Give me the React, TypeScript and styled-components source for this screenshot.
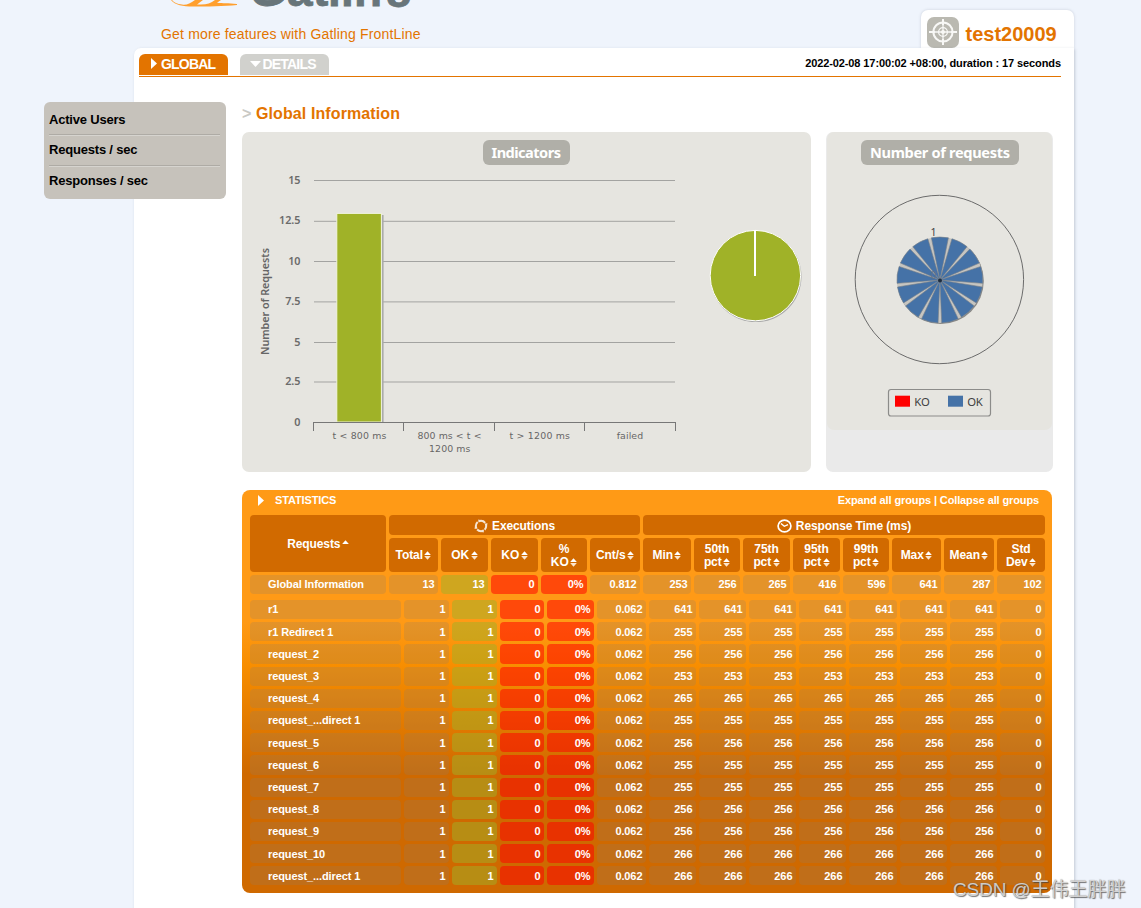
import React from "react";
import styled, { createGlobalStyle } from "styled-components";

const GlobalStyle = createGlobalStyle`
  * { box-sizing: border-box; }
  html, body { margin: 0; padding: 0; background: #eff4fc; }
  body { font-family: "Liberation Sans", Arial, sans-serif; overflow: hidden; }
`;

const Frame = styled.div`
  width: 1141px;
  height: 908px;
  overflow: hidden;
  position: relative;
  padding-left: 134px;
`;

const Header = styled.header`
  height: 48px;
  width: 940px;
  display: flex;
  justify-content: space-between;
`;

const Brand = styled.div`
  padding-left: 27px;
  display: flex;
  flex-direction: column;
`;

const LogoArt = styled.svg`
  display: block;
  width: 270px;
  height: 14px;
`;

const Promo = styled.a`
  margin-top: 11px;
  line-height: 18px;
  font-size: 14px;
  letter-spacing: 0.17px;
  color: #e37400;
  white-space: nowrap;
`;

const SimTab = styled.div`
  margin-top: 10px;
  width: 153px;
  height: 38px;
  padding: 7px 0 0 6px;
  display: flex;
  gap: 6.5px;
  background: #fff;
  border-radius: 7px 7px 0 0;
  box-shadow: 0 0 3px rgba(90, 100, 120, 0.25);
`;

const SimName = styled.span`
  font-weight: bold;
  font-size: 20px;
  line-height: 34px;
  color: #e37400;
`;

const Main = styled.main`
  position: relative;
  width: 940px;
  height: 880px;
  padding: 6px 13px 0 5px;
  background: #fff;
  border-radius: 7px 0 0 0;
  box-shadow: 1px 1px 3px rgba(90, 100, 120, 0.3);
`;

const NavBar = styled.nav`
  height: 23px;
  display: flex;
  align-items: flex-start;
  gap: 12px;
  border-bottom: 1px solid #e37400;
`;

const NavTab = styled.div<{ $active?: boolean }>`
  width: 89px;
  height: 21px;
  padding-left: ${(p) => (p.$active ? 11.5 : 10)}px;
  display: flex;
  gap: ${(p) => (p.$active ? 4.5 : 1.5)}px;
  border-radius: 6px 6px 0 0;
  background: ${(p) => (p.$active ? "#e37400" : "#d1d1cd")};
  color: #fff;
  font-size: 14px;
  font-weight: bold;
  line-height: 21px;
  letter-spacing: -0.8px;
`;

const TabMark = styled.svg`
  flex: none;
  margin-top: 4px;
`;

const RunInfo = styled.div`
  margin-left: auto;
  font-size: 11px;
  font-weight: bold;
  line-height: 19px;
  letter-spacing: -0.1px;
  color: #000;
`;

const Body = styled.div`
  display: flex;
  align-items: flex-start;
  gap: 16px;
  margin-left: -95px;
`;

const Menu = styled.ul`
  flex: none;
  margin: 25px 0 0;
  padding: 3px 6px 0 5px;
  width: 182px;
  height: 97px;
  list-style: none;
  background: #c6c2bb;
  border-radius: 6px;
`;

const MenuItem = styled.li`
  height: 30.3px;
  line-height: 29px;
  font-size: 13px;
  font-weight: bold;
  letter-spacing: -0.2px;
  color: #000;
  &:not(:last-child) {
    border-bottom: 1px solid #aeaba5;
    box-shadow: 0 1px 0 #d6d4cf;
  }
`;

const Content = styled.section`
  width: 811px;
`;

const PageTitle = styled.h1`
  margin: 25px 0 0;
  height: 30px;
  font-size: 16px;
  line-height: 23px;
  letter-spacing: 0.1px;
  color: #e37400;
  & > span { color: #c9c9c5; }
`;

const Charts = styled.div`
  display: flex;
  gap: 15px;
`;

const Panel = styled.div<{ $w: number; $bg: string }>`
  width: ${(p) => p.$w}px;
  height: 340px;
  border-radius: 7px;
  background: ${(p) => p.$bg};
  svg { display: block; }
`;

const Stats = styled.div`
  margin-top: 18px;
  width: 810px;
  height: 403px;
  padding: 0 7px 0 8px;
  border-radius: 8px;
  background: linear-gradient(#ff9a16 0, #ff9a16 132px, #f88e00 175px, #cf6900 284px, #cf6900 100%);
  color: #fff;
  font-size: 11px;
  font-weight: bold;
  letter-spacing: -0.1px;
`;

const StatsTop = styled.div`
  height: 25px;
  padding: 0 6px 0 8px;
  display: flex;
  line-height: 21px;
  letter-spacing: -0.12px;
  svg { margin: 5px 11px 0 0; }
`;

const StatsLinks = styled.span`
  margin-left: auto;
`;

const HeadGrid = styled.div`
  display: grid;
  grid-template-columns: 136px 49px 47px 47px 46px 50px 48px 46px 47px 47px 46px 49px 50px 48px;
  grid-template-rows: 20px 34px 19px;
  gap: 3px;
`;

const Th = styled.div<{ $span?: number; $rows?: number }>`
  grid-column: span ${(p) => p.$span ?? 1};
  grid-row: span ${(p) => p.$rows ?? 1};
  padding-top: ${(p) => (p.$span ? 2 : 1)}px;
  display: flex;
  align-items: center;
  justify-content: center;
  gap: 4px;
  background: #d16a00;
  border-radius: 4px;
  font-size: 12px;
  line-height: 13px;
  white-space: nowrap;
`;

const ThLabel = styled.span`
  display: flex;
  flex-direction: column;
  align-items: center;
  & > span {
    display: flex;
    align-items: center;
    gap: 1.5px;
  }
`;

const RowsGrid = styled.div`
  margin-top: 6px;
  display: grid;
  grid-template-columns: 151px 45px 45px 44px 47px 49px 47px 47px 47px 47px 48px 47px 47px 45px;
  grid-auto-rows: 19.19px;
  gap: 3px;
`;

type Tone = "plain" | "ok" | "ko";

const tones: Record<Tone, string> = {
  plain: "rgba(146, 128, 100, 0.25)",
  ok: "rgba(159, 178, 40, 0.5)",
  ko: "rgba(255, 0, 0, 0.52)",
};

const Cell = styled.div<{ $tone: Tone; $pad: number; $top: number }>`
  padding-top: ${(p) => p.$top}px;
  padding-right: ${(p) => p.$pad}px;
  border-radius: 4px;
  background: ${(p) => tones[p.$tone]};
  text-align: right;
  line-height: 19px;
  white-space: nowrap;
`;

const NameCell = styled(Cell)`
  padding-left: 18px;
  text-align: left;
`;

const Watermark = styled.div`
  position: absolute;
  left: 953px;
  top: 878px;
  font: 19px/24px "Liberation Sans", "Noto Sans CJK SC", sans-serif;
  letter-spacing: -0.1px;
  color: rgba(225, 225, 225, 0.85);
  text-shadow: 1px 1px 1px rgba(60, 60, 60, 0.7), 0 0 1px rgba(90, 90, 90, 0.6);
  white-space: nowrap;
`;

const Sort = ({ up }: { up?: boolean }) => (
  <svg width="7" height="9" viewBox="0 0 7 9">
    <path d="M3.500 .3 6.800 4.100H.2Z" fill="#fff" />
    {!up && <path d="M3.500 8.700 .2 4.900H6.800Z" fill="#fbe6cf" />}
  </svg>
);

const Target = () => (
  <svg width="32" height="31" viewBox="0 0 32 31">
    <rect width="32" height="31" rx="7" fill="#bab9b1" />
    <g fill="none" stroke="#f8f8f6">
      <circle cx="16" cy="15" r="9.6" strokeWidth="2" />
      <circle cx="16" cy="15" r="4.4" strokeWidth="1.3" />
      <path d="M16 2v26M2 15h28" strokeWidth="1.3" />
      <path d="M16 2v6M16 22v6M2 15h6M24 15h6" strokeWidth="2" />
    </g>
    <circle cx="16" cy="15" r="2" fill="#f8f8f6" />
  </svg>
);

const chartFont = '"Noto Sans", "Open Sans", sans-serif';
const tickFont = '"DejaVu Sans", sans-serif';

const yTicks = [
  { y: 180.5, label: "15" },
  { y: 221.3, label: "12.5" },
  { y: 261.5, label: "10" },
  { y: 301.9, label: "7.5" },
  { y: 342.5, label: "5" },
  { y: 382, label: "2.5" },
  { y: 422.5, label: "0" },
];

const Badge = ({ x, w, tx, tw, children }: { x: number; w: number; tx: number; tw: number; children: string }) => (
  <g>
    <rect x={x} y={140} width={w} height={25} rx={6} fill="#b0afa8" />
    <text x={tx} y={158.3} textLength={tw} fontFamily={chartFont} fontWeight="bold" fontSize="14.6" fill="#fff">
      {children}
    </text>
  </g>
);

const Indicators = () => (
  <svg width="569" height="340" viewBox="242 132 569 340">
    <Badge x={483} w={87} tx={491.5} tw={69.5}>Indicators</Badge>
    {yTicks.map((t) => (
      <g key={t.label}>
        <path d={`M314 ${t.y}H675`} stroke={t.label === "0" ? "#777" : "#a3a3a1"} />
        <text x="300.5" y={t.y + 3} textAnchor="end" fontFamily={chartFont} fontWeight="600" fontSize="10.8" fill="#6b6b6b">
          {t.label}
        </text>
      </g>
    ))}
    <path d="M313.5 422v9M403.5 422v9M494.5 422v9M584.5 422v9M675.5 422v9" stroke="#777" />
    <path d="M382.600 215v207" stroke="#aaa" strokeWidth="2" />
    <rect x="336.8" y="213.4" width="44.6" height="208.6" fill="#a0b228" stroke="#f1f3df" />
    <path d="M314 422.5H675" stroke="#777" />
    <text transform="translate(269.3 355) rotate(-90)" textLength="107" fontFamily={chartFont} fontWeight="600" fontSize="10.8" fill="#666">
      Number of Requests
    </text>
    <g fontFamily={tickFont} fontSize="9.4" fill="#666">
      <text x="332.5" y="439" textLength="54">{"t < 800 ms"}</text>
      <text x="417.5" y="439" textLength="64">{"800 ms < t <"}</text>
      <text x="429" y="452" textLength="41.5">1200 ms</text>
      <text x="509.5" y="439" textLength="60.5">{"t > 1200 ms"}</text>
      <text x="616.7" y="439" textLength="26.5">failed</text>
    </g>
    <circle cx="756" cy="276.6" r="45.5" fill="#aaa" />
    <circle cx="755.4" cy="275.6" r="45.2" fill="#a0b228" stroke="#fff" />
    <path d="M755 230v46" stroke="#fff" strokeWidth="2" />
  </svg>
);

const polar = (r: number, deg: number) => {
  const a = ((deg - 90) * Math.PI) / 180;
  return `${(939.9 + r * Math.cos(a)).toFixed(2)} ${(280 + r * Math.sin(a)).toFixed(2)}`;
};

const RequestCount = () => (
  <svg width="227" height="340" viewBox="826 132 227 340">
    <rect x="827" y="132" width="225" height="298" rx="7" fill="#e6e5e0" />
    <Badge x={861} w={158} tx={870} tw={140}>Number of requests</Badge>
    <circle cx="939.4" cy="279.5" r="84.2" fill="none" stroke="#6b6b6b" />
    <circle cx="940.6" cy="280.9" r="43.2" fill="#8a8986" />
    <circle cx="939.9" cy="280" r="43" fill="#c6c5c1" />
    {Array.from({ length: 13 }, (_, i) => {
      const mid = (i * 360) / 13;
      return (
        <path
          key={i}
          d={`M939.9 280L${polar(43, mid - 11.4)}A43 43 0 0 1 ${polar(43, mid + 11.4)}Z`}
          fill="#4572a7"
          stroke="#777f88"
          strokeWidth="0.6"
        />
      );
    })}
    <circle cx="940" cy="280.5" r="2" fill="#1d2c3f" />
    <g fontFamily={chartFont} fontSize="10.5">
      <text x="930.5" y="236" fill="#444">1</text>
      <text x="930.5" y="278.5" fill="#60718a">0</text>
    </g>
    <rect x="888.5" y="389.5" width="102" height="26.5" rx="2.5" fill="none" stroke="#8c8c8a" strokeWidth="1.2" />
    <rect x="895" y="395.7" width="15" height="11" fill="#f00" />
    <rect x="948" y="395.7" width="15" height="11" fill="#4572a7" />
    <g fontFamily={chartFont} fontSize="11.3" fill="#3e3e3e">
      <text x="914.3" y="406" textLength="15.5">KO</text>
      <text x="967.3" y="406" textLength="15.5">OK</text>
    </g>
  </svg>
);

const columns: string[][] = [
  ["Total"], ["OK"], ["KO"], ["%", "KO"], ["Cnt/s"], ["Min"], ["50th", "pct"],
  ["75th", "pct"], ["95th", "pct"], ["99th", "pct"], ["Max"], ["Mean"], ["Std", "Dev"],
];

const summary = ["13", "13", "0", "0%", "0.812", "253", "256", "265", "416", "596", "641", "287", "102"];

const requests: [string, string][] = [
  ["r1", "641"],
  ["r1 Redirect 1", "255"],
  ["request_2", "256"],
  ["request_3", "253"],
  ["request_4", "265"],
  ["request_...direct 1", "255"],
  ["request_5", "256"],
  ["request_6", "255"],
  ["request_7", "255"],
  ["request_8", "256"],
  ["request_9", "256"],
  ["request_10", "266"],
  ["request_...direct 1", "266"],
];

const toneOf = (i: number): Tone => (i === 1 ? "ok" : i === 2 || i === 3 ? "ko" : "plain");

const StatRow = ({ name, values, pad, top }: { name: string; values: string[]; pad: number; top: number }) => (
  <>
    <NameCell $tone="plain" $pad={0} $top={top}>{name}</NameCell>
    {values.map((v, i) => (
      <Cell key={i} $tone={toneOf(i)} $pad={pad} $top={top}>{v}</Cell>
    ))}
  </>
);

const Statistics = () => (
  <Stats>
    <StatsTop>
      <svg width="6" height="11" viewBox="0 0 6 11"><path d="M0 0 6 5.500 0 11Z" fill="#fff" /></svg>
      STATISTICS
      <StatsLinks>Expand all groups | Collapse all groups</StatsLinks>
    </StatsTop>
    <HeadGrid>
      <Th $rows={2}>
        <ThLabel><span>Requests <Sort up /></span></ThLabel>
      </Th>
      <Th $span={5}>
        <svg width="14" height="14" viewBox="0 0 14 14">
          <circle cx="7" cy="7" r="5.2" fill="none" stroke="#f6e6d4" strokeWidth="2" strokeDasharray="7 1.17" strokeDashoffset="3" />
          <path d="M4.500.2 7.200 1.800 4.500 3.600ZM13.800 4.500 12.200 7.200 10.400 4.500ZM9.500 13.800 6.800 12.200 9.500 10.400ZM.2 9.500 1.800 6.800 3.600 9.500Z" fill="#f6e6d4" />
        </svg>
        Executions
      </Th>
      <Th $span={8}>
        <svg width="15" height="14" viewBox="0 0 15 14">
          <ellipse cx="7.5" cy="7" rx="6.4" ry="5.9" fill="none" stroke="#fff" strokeWidth="1.7" />
          <path d="M4 4.500 7.300 7.300 11 5.600" fill="none" stroke="#fff" strokeWidth="1.4" />
        </svg>
        Response Time (ms)
      </Th>
      {columns.map((lines, i) => (
        <Th key={i}>
          <ThLabel>
            {lines.map((l, j) => (
              <span key={j}>{l}{j === lines.length - 1 && <Sort />}</span>
            ))}
          </ThLabel>
        </Th>
      ))}
      <StatRow name="Global Information" values={summary} pad={3.5} top={0} />
    </HeadGrid>
    <RowsGrid>
      {requests.map(([name, t], i) => (
        <StatRow key={i} name={name} values={["1", "1", "0", "0%", "0.062", t, t, t, t, t, t, t, "0"]} pad={3.6} top={0.48} />
      ))}
    </RowsGrid>
  </Stats>
);

export default function App() {
  return (
    <Frame>
      <GlobalStyle />
      <Header>
        <Brand>
          <LogoArt viewBox="161 0 270 14">
            <path d="M171 0c4 5 12 6.600 22 6.600 14 0 31-.2 44-1.600v-1c-9-.9-14-.6-20-1.200l4-2.800h-6c-4 3-8 4.500-14 4.500h-4l6-4.500h-8c-5 4-9 5.200-13 4.500-5-.5-8-2-10-4.500z" fill="#ff9f2e" />
            <g fontFamily="Liberation Sans" fontWeight="bold" fill="#68757a" stroke="#68757a" strokeWidth="0.8">
              <text y="6.300" x="249" fontSize="48">G</text>
              <text y="6.300" x="287 313 328 341 354" fontSize="46">atlin</text>
              <text y="-3.200" x="385" fontSize="46">g</text>
            </g>
          </LogoArt>
          <Promo>Get more features with Gatling FrontLine</Promo>
        </Brand>
        <SimTab>
          <Target />
          <SimName>test20009</SimName>
        </SimTab>
      </Header>
      <Main>
        <NavBar>
          <NavTab $active>
            <TabMark width="6" height="11" viewBox="0 0 6 11"><path d="M0 0 6 5.500 0 11Z" fill="#fff" /></TabMark>
            GLOBAL
          </NavTab>
          <NavTab>
            <TabMark width="11" height="12" viewBox="0 0 11 12"><path d="M0 3H11L5.500 9Z" fill="#fff" /></TabMark>
            DETAILS
          </NavTab>
          <RunInfo>2022-02-08 17:00:02 +08:00, duration : 17 seconds</RunInfo>
        </NavBar>
        <Body>
          <Menu>
            <MenuItem>Active Users</MenuItem>
            <MenuItem>Requests / sec</MenuItem>
            <MenuItem>Responses / sec</MenuItem>
          </Menu>
          <Content>
            <PageTitle><span>&gt;</span> Global Information</PageTitle>
            <Charts>
              <Panel $w={569} $bg="#e6e5e0"><Indicators /></Panel>
              <Panel $w={227} $bg="#eaeaea"><RequestCount /></Panel>
            </Charts>
            <Statistics />
          </Content>
        </Body>
      </Main>
      <Watermark>CSDN @王伟王胖胖</Watermark>
    </Frame>
  );
}
